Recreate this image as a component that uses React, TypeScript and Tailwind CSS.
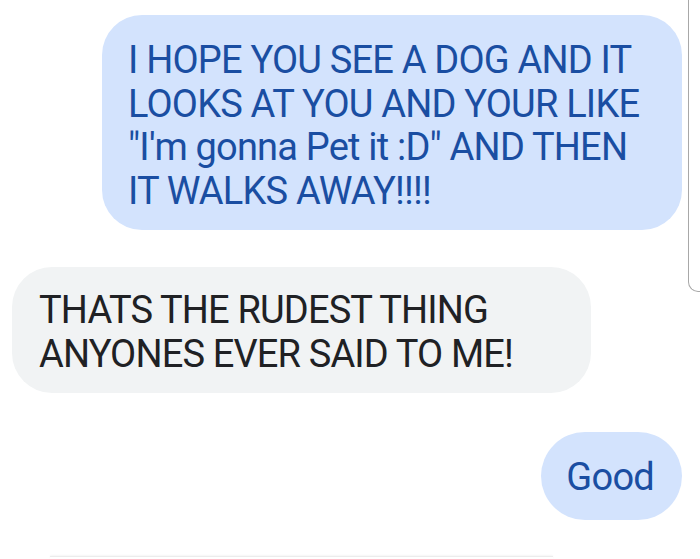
import React from "react";

export default function App() {
  const font = { fontFamily: "Roboto, 'Noto Sans', Arial, sans-serif" };
  return (
    <div className="relative w-[700px] h-[559px] overflow-hidden bg-white" style={font}>
      <div className="flex flex-col">
        <div className="self-end mr-[18px] mt-[15px] w-[580px] rounded-[40px] bg-[#d3e3fd] pl-[26px] pr-[20px] pt-[24px] pb-[17px] text-[38px] leading-[43.5px] tracking-[-0.8px] text-[#1a4ea2] whitespace-nowrap">
          I HOPE YOU SEE A DOG AND IT
          <br />
          LOOKS AT YOU AND YOUR LIKE
          <br />
          "I'm gonna Pet it :D" AND THEN
          <br />
          IT WALKS AWAY!!!!
        </div>
        <div className="self-start ml-[12px] mt-[37px] w-[579px] rounded-[40px] bg-[#f1f3f4] pl-[27px] pr-[20px] pt-[22px] pb-[17px] text-[38px] leading-[43.5px] tracking-[-0.85px] text-[#202124] whitespace-nowrap">
          THATS THE RUDEST THING
          <br />
          ANYONES EVER SAID TO ME!
        </div>
        <div className="self-end mr-[18px] mt-[39px] h-[88px] rounded-full bg-[#d3e3fd] pl-[25px] pr-[28px] pt-[24px] text-[38px] leading-[43.5px] tracking-[-0.75px] text-[#1a4ea2]">
          Good
        </div>
      </div>
      <div className="absolute left-[688px] top-[-20px] w-[20px] h-[312px] border-l border-b border-[#a8a8a8] rounded-bl-[10px]" />
      <div className="absolute left-[50px] top-[556px] w-[503px] h-[4px] border-t border-[#ececec] shadow-[0_-1px_2px_rgba(0,0,0,0.04)]" />
    </div>
  );
}
